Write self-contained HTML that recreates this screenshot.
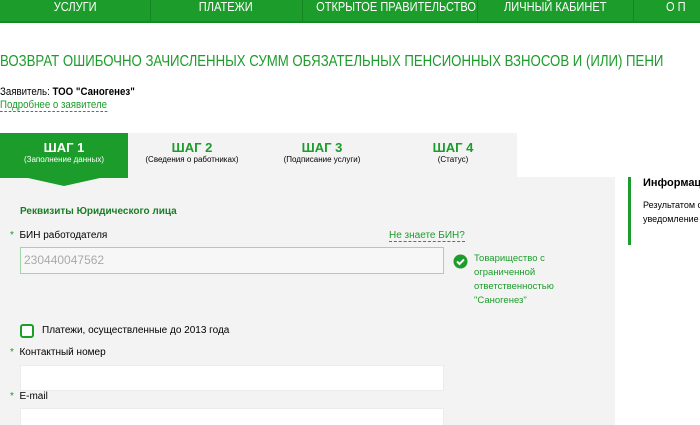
<!DOCTYPE html>
<html><head><meta charset="utf-8"><style>
*{margin:0;padding:0;box-sizing:border-box}
body{width:700px;height:425px;overflow:hidden;background:#fff;font-family:"Liberation Sans",sans-serif;position:relative}
.a{position:absolute;white-space:nowrap}
.nav{position:absolute;left:0;top:0;width:700px;height:23px;background:#1c9c2b;border-bottom:2px solid #138a22}
.nav div{position:absolute;top:0;height:21px;color:#fff;font-size:13px;line-height:14px;text-align:center;white-space:nowrap}
.sep{position:absolute;top:0;width:1px;height:21px;background:#168524}
.n{transform:scaleX(.85);display:inline-block;white-space:nowrap}
.g{color:#1c9c2b}
</style></head><body>
<div class="nav">
<div style="left:0;width:150px"><span class="n">УСЛУГИ</span></div>
<div style="left:150px;width:152px"><span class="n">ПЛАТЕЖИ</span></div>
<div style="left:302px;width:175px"><span class="n">ОТКРЫТОЕ ПРАВИТЕЛЬСТВО</span></div>
<div style="left:477px;width:156px"><span class="n">ЛИЧНЫЙ КАБИНЕТ</span></div>
<div style="left:666px;width:60px;text-align:left"><span class="n" style="transform-origin:left">О П</span></div>
<span class="sep" style="left:150px"></span><span class="sep" style="left:302px"></span><span class="sep" style="left:477px"></span><span class="sep" style="left:633px"></span>
</div>
<div class="a g" style="left:0;top:53px;font-size:16px;transform:scaleX(.825);transform-origin:left">ВОЗВРАТ ОШИБОЧНО ЗАЧИСЛЕННЫХ СУММ ОБЯЗАТЕЛЬНЫХ ПЕНСИОННЫХ ВЗНОСОВ И (ИЛИ) ПЕНИ</div>
<div class="a" style="left:0;top:86px;font-size:11px;transform:scaleX(.88);transform-origin:left">Заявитель: <b>ТОО "Саногенез"</b></div>
<div class="a g" style="left:0;top:99px;font-size:11px;border-bottom:1px dashed #1c9c2b;transform:scaleX(.88);transform-origin:left">Подробнее о заявителе</div>
<div class="a" style="left:0;top:133px;width:517px;height:44px;background:#f3f3f3"></div>
<div class="a" style="left:0;top:177px;width:615px;height:248px;background:#f3f3f3"></div>
<svg class="a" style="left:0;top:133px" width="129" height="54"><path d="M0 0H128V45L100 45 64 53 28 45H0Z" fill="#1c9c2b"/></svg>
<div class="a" style="left:0;top:140px;width:128px;text-align:center;color:#fff;font-size:13px;font-weight:bold">ШАГ 1</div>
<div class="a" style="left:0;top:155px;width:128px;text-align:center;color:#fff;font-size:8px">(Заполнение данных)</div>
<div class="a g" style="left:128px;top:140px;width:128px;text-align:center;font-size:13px;font-weight:bold">ШАГ 2</div>
<div class="a" style="left:128px;top:155px;width:128px;text-align:center;font-size:8px">(Сведения о работниках)</div>
<div class="a g" style="left:258px;top:140px;width:128px;text-align:center;font-size:13px;font-weight:bold">ШАГ 3</div>
<div class="a" style="left:258px;top:155px;width:128px;text-align:center;font-size:8px">(Подписание услуги)</div>
<div class="a g" style="left:389px;top:140px;width:128px;text-align:center;font-size:13px;font-weight:bold">ШАГ 4</div>
<div class="a" style="left:389px;top:155px;width:128px;text-align:center;font-size:8px">(Статус)</div>
<div class="a" style="left:628px;top:177px;width:3px;height:68px;background:#1c9c2b"></div>
<div class="a" style="left:643px;top:177px;font-size:11px;font-weight:bold">Информаци</div>
<div class="a" style="left:643px;top:198px;font-size:9px;line-height:14px">Результатом с<br>уведомление</div>
<div class="a" style="left:20px;top:206px;font-size:10px;font-weight:bold;color:#1a7d26">Реквизиты Юридического лица</div>
<div class="a" style="left:10px;top:230px;font-size:10px"><span class="g">*</span> &nbsp;БИН работодателя</div>
<div class="a g" style="left:389px;top:230px;font-size:10px;border-bottom:1px dashed #1c9c2b">Не знаете БИН?</div>
<div class="a" style="left:20px;top:247px;width:424px;height:27px;background:#f7f7f7;border:1px solid #9fd6a6;font-size:12px;color:#aaa;padding:5px 3px">230440047562</div>
<svg class="a" style="left:453px;top:254px" width="15" height="15"><circle cx="7.5" cy="7.5" r="7" fill="#1c9c2b"/><path d="M4 7.5l2.5 2.5 4.5-4.5" stroke="#fff" stroke-width="2" fill="none"/></svg>
<div class="a g" style="left:474px;top:252px;font-size:9.5px;line-height:14px">Товарищество с<br>ограниченной<br>ответственностью<br>"Саногенез"</div>
<div class="a" style="left:20px;top:324px;width:14px;height:14px;border:2px solid #1c9c2b;border-radius:3px;background:#fff"></div>
<div class="a" style="left:42px;top:325px;font-size:10px">Платежи, осуществленные до 2013 года</div>
<div class="a" style="left:10px;top:347px;font-size:10px"><span class="g">*</span> &nbsp;Контактный номер</div>
<div class="a" style="left:20px;top:365px;width:424px;height:26px;background:#fff;border:1px solid #ececec"></div>
<div class="a" style="left:10px;top:391px;font-size:10px"><span class="g">*</span> &nbsp;E-mail</div>
<div class="a" style="left:20px;top:408px;width:424px;height:17px;background:#fff;border:1px solid #ececec;border-bottom:none"></div>
</body></html>
